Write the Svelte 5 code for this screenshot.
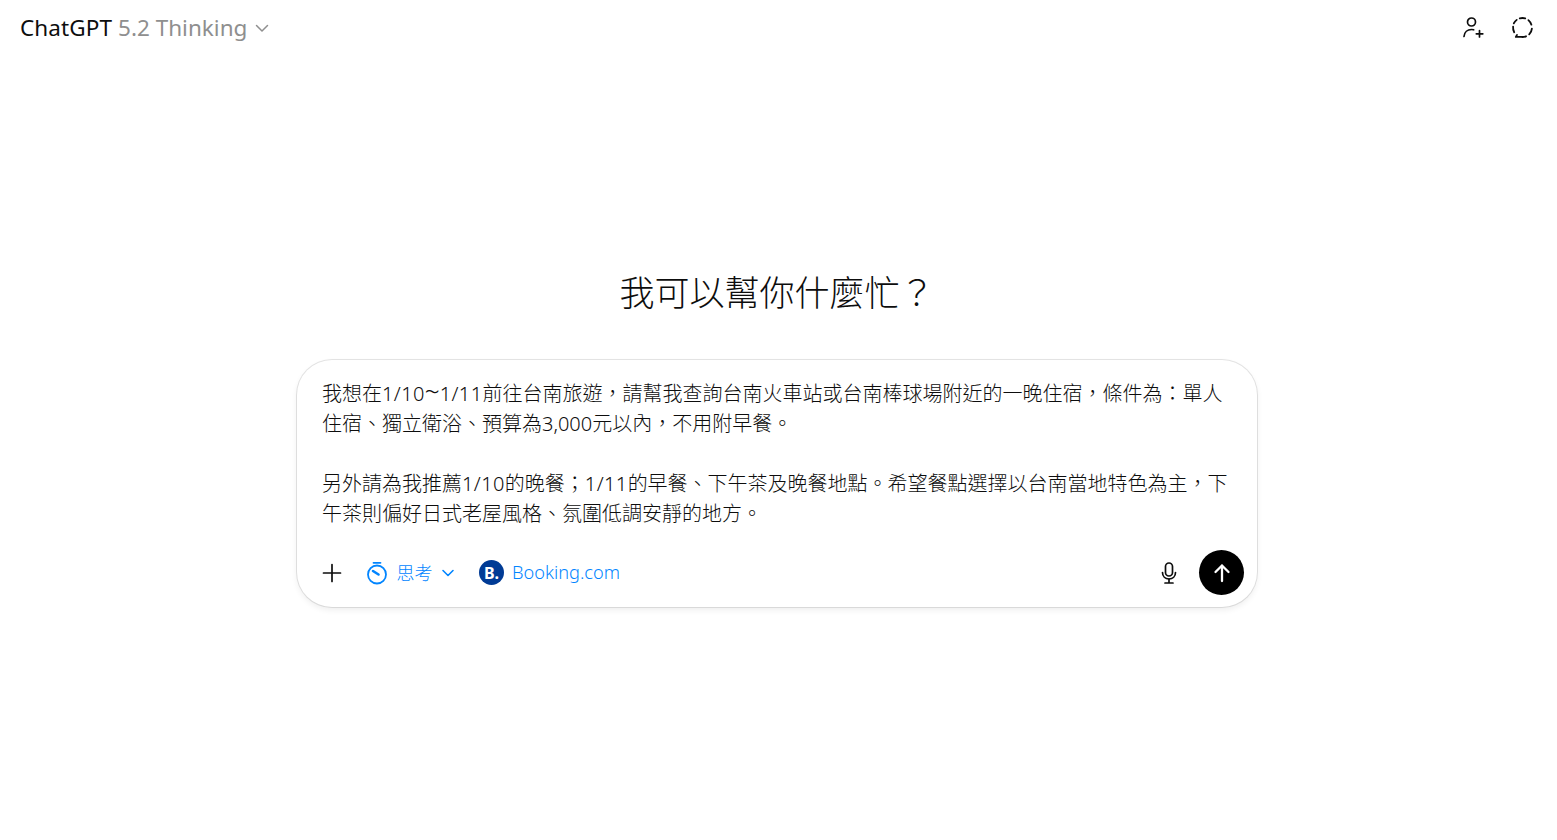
<script lang="ts">
	const prompt = [
		'我想在1/10~1/11前往台南旅遊，請幫我查詢台南火車站或台南棒球場附近的一晚住宿，條件為：單人',
		'住宿、獨立衛浴、預算為3,000元以內，不用附早餐。',
		'',
		'另外請為我推薦1/10的晚餐；1/11的早餐、下午茶及晚餐地點。希望餐點選擇以台南當地特色為主，下',
		'午茶則偏好日式老屋風格、氛圍低調安靜的地方。'
	];

	// dates sit a little wider in the original font, so they get their own span
	const segments = (line: string) => line.split(/(\d+\/\d+|~)/).filter(Boolean);
	const isDate = (part: string) => /^\d+\/\d+$/.test(part);
</script>

<div class="page" lang="zh-Hant-TW">
	<header class="topbar">
		<button class="model">
			<span class="brand">ChatGPT</span>
			<span class="version">5.2 Thinking</span>
			<svg class="caret" viewBox="0 0 16 16" width="16" height="16" fill="none" stroke="#8f8f8f" stroke-width="1.5" stroke-linecap="round" stroke-linejoin="round">
				<path d="M2.5 5.5 8 11l5.5-5.5" />
			</svg>
		</button>
		<div class="actions">
			<svg viewBox="0 0 25 25" width="25" height="25" fill="none" stroke="#0d0d0d" stroke-width="1.7" stroke-linecap="round">
				<circle cx="11.5" cy="7" r="4" />
				<path d="M4 21.5c.4-4.400 3.500-7 7.500-7 .8 0 1.500.1 2.200.3" />
				<path d="M19.500 15.500v6.500M16.300 18.800h6.500" />
			</svg>
			<svg viewBox="0 0 25 25" width="25" height="25" fill="none" stroke="#0d0d0d" stroke-width="1.8" stroke-linecap="round" stroke-linejoin="round">
				<path d="M9.800 3.400a9.500 9.500 0 0 1 5.400 0" />
				<path d="M18.400 5.100a9.500 9.500 0 0 1 3 4.600" />
				<path d="M21.900 13.600a9.500 9.500 0 0 1-2.700 5.800" />
				<path d="M16 21.300a9.500 9.500 0 0 1-4.800.6H5.800l1.200-2" />
				<path d="M4.200 17.200a9.500 9.500 0 0 1-1.100-5.500" />
				<path d="M3.800 8.400a9.500 9.500 0 0 1 2.900-3.500" />
			</svg>
		</div>
	</header>

	<main class="center">
		<h1>我可以幫你什麼忙？</h1>
		<form class="composer">
			<div class="input">
				{#each prompt as line}
					<div class="line">
						{#each segments(line) as part}
							{#if part === '~'}<span class="tilde">~</span>{:else if isDate(part)}<span class="date">{part}</span>{:else}{part}{/if}
						{/each}
					</div>
				{/each}
			</div>
			<div class="tools">
				<svg class="plus" viewBox="0 0 20 20" width="20" height="20" fill="none" stroke="#0d0d0d" stroke-width="1.7" stroke-linecap="round">
					<path d="M10 1.500v17M1.500 10h17" />
				</svg>
				<div class="chip think">
					<svg viewBox="0 0 22 24" width="22" height="24" fill="none" stroke="#0285ff" stroke-width="1.8" stroke-linecap="round">
						<circle cx="11" cy="13.500" r="9" />
						<path d="M7.500 1.800h7" />
						<path d="M7 10l5.500 3.500" stroke-width="2.600" />
					</svg>
					<span class="label">思考</span>
					<svg viewBox="0 0 14 14" width="14" height="14" fill="none" stroke="#0285ff" stroke-width="1.6" stroke-linecap="round" stroke-linejoin="round">
						<path d="M2 4.500 7 9.500l5-5" />
					</svg>
				</div>
				<div class="chip booking">
					<span class="logo">B<i>.</i></span>
					<span class="label">Booking.com</span>
				</div>
				<div class="spacer"></div>
				<svg class="mic" viewBox="0 0 24 24" width="24" height="24" fill="none" stroke="#0d0d0d" stroke-width="1.7" stroke-linecap="round">
					<rect x="8.500" y="2" width="7" height="13" rx="3.500" />
					<path d="M5.500 11.500c0 4 2.800 6.500 6.500 6.500s6.500-2.500 6.500-6.500" />
					<path d="M12 18v3.500M8 22h8" />
				</svg>
				<button class="send" type="button" aria-label="send">
					<svg viewBox="0 0 24 24" width="24" height="24" fill="none" stroke="#fff" stroke-width="2.300" stroke-linecap="round" stroke-linejoin="round">
						<path d="M12 20V4.500M5.500 11 12 4.500l6.500 6.500" />
					</svg>
				</button>
			</div>
		</form>
	</main>
</div>

<style>
	:global(body) {
		margin: 0;
		background: #fff;
		color: #0d0d0d;
		font-family: "Noto Sans", "Noto Sans CJK TC", sans-serif;
	}

	.page {
		display: flex;
		flex-direction: column;
		height: 840px;
		overflow: hidden;
	}

	.topbar {
		display: flex;
		align-items: center;
		justify-content: space-between;
		height: 55px;
		padding: 0 22px 0 20px;
	}

	.model {
		display: flex;
		align-items: center;
		gap: 6px;
		padding: 0;
		border: 0;
		background: none;
		font: inherit;
		font-size: 22.500px;
	}

	.brand {
		color: #0d0d0d;
		letter-spacing: 0.1px;
	}

	.version {
		color: #8f8f8f;
	}

	.caret {
		margin-left: 1px;
	}

	.actions {
		display: flex;
		align-items: center;
		gap: 25px;
	}

	.center {
		display: flex;
		flex-direction: column;
		align-items: center;
		padding-right: 3px;
	}

	h1 {
		margin: 213px 0 0;
		font-size: 35px;
		line-height: 50px;
		font-weight: 300;
		color: #0d0d0d;
	}

	.composer {
		display: flex;
		flex-direction: column;
		box-sizing: border-box;
		width: 960px;
		height: 247px;
		margin-top: 42px;
		padding: 19px 13px 12px 25px;
		border-radius: 35px;
		background: #fff;
		box-shadow: 0 0 0 1px rgba(0, 0, 0, 0.1), 0 3px 6px rgba(0, 0, 0, 0.07);
	}

	.input {
		font-size: 20px;
		line-height: 30px;
		font-weight: 300;
		color: #0d0d0d;
	}

	.line {
		min-height: 30px;
		white-space: nowrap;
	}

	.date {
		letter-spacing: 0.4px;
	}

	.tilde {
		font-size: 26px;
		line-height: 0;
	}

	.tools {
		display: flex;
		align-items: center;
		height: 45px;
		margin-top: auto;
	}

	.plus {
		margin-right: 24px;
	}

	.chip {
		display: flex;
		align-items: center;
		color: #0285ff;
		font-size: 18.200px;
		font-weight: 300;
	}

	.label {
		margin-bottom: 2px;
	}

	.think {
		gap: 8.500px;
		margin-right: 24px;
		font-size: 18px;
	}

	.booking {
		gap: 8px;
	}

	.logo {
		display: flex;
		align-items: center;
		justify-content: center;
		width: 25px;
		height: 25px;
		border-radius: 50%;
		background: #003b95;
		color: #fff;
		font-size: 16px;
		font-weight: 700;
	}

	.logo i {
		font-style: normal;
	}

	.spacer {
		flex: 1;
	}

	.mic {
		margin-right: 18px;
	}

	.send {
		display: flex;
		align-items: center;
		justify-content: center;
		width: 45px;
		height: 45px;
		padding: 0;
		border: 0;
		border-radius: 50%;
		background: #000;
	}
</style>
